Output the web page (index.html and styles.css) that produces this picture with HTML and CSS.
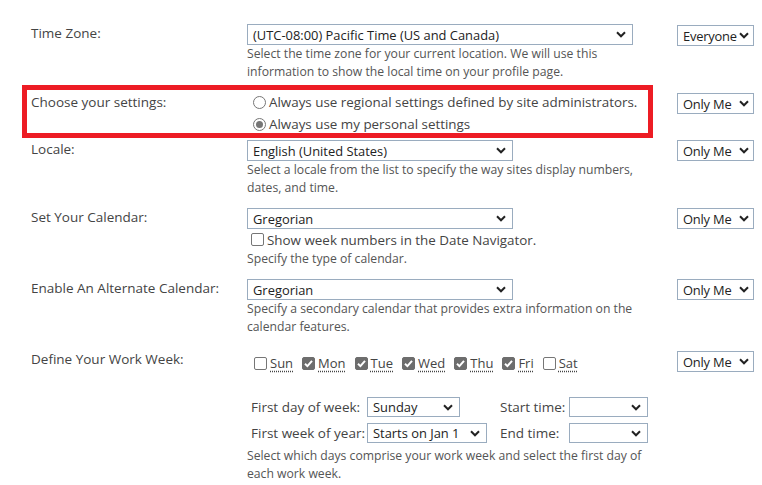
FILE: index.html
```html
<!DOCTYPE html>
<html lang="en">

<head>
    <meta charset="UTF-8">
    <title>Regional Settings</title>
    <link rel="stylesheet" href="styles.css">
</head>

<body>
    <div class="settings">
        <!-- Time zone -->
        <div class="row row-tz">
            <div class="label">Time Zone:</div>
            <div class="field">
                <div class="select w-tz"><span>(UTC-08:00) Pacific Time (US and Canada)</span><svg class="chev" width="10" height="7" viewBox="0 0 10 7"><path d="M1 1.3 L5 5.3 L9 1.3"/></svg></div>
                <div class="desc">Select the time zone for your current location. We will use this<br>information to show the local time on your profile page.</div>
            </div>
            <div class="privacy priv-top"><div class="select priv"><span>Everyone</span><svg class="chev" width="10" height="7" viewBox="0 0 10 7"><path d="M1 1.3 L5 5.3 L9 1.3"/></svg></div></div>
        </div>

        <!-- Choose settings (highlighted) -->
        <div class="row row-choose">
            <div class="label label-choose">Choose your settings:</div>
            <div class="field">
                <div class="option"><span class="radio"></span>Always use regional settings defined by site administrators.</div>
                <div class="option"><span class="radio checked"></span>Always use my personal settings</div>
            </div>
            <div class="privacy priv-choose"><div class="select priv"><span>Only Me</span><svg class="chev" width="10" height="7" viewBox="0 0 10 7"><path d="M1 1.3 L5 5.3 L9 1.3"/></svg></div></div>
        </div>

        <!-- Locale -->
        <div class="row row-locale">
            <div class="label">Locale:</div>
            <div class="field">
                <div class="select w-mid"><span>English (United States)</span><svg class="chev" width="10" height="7" viewBox="0 0 10 7"><path d="M1 1.3 L5 5.3 L9 1.3"/></svg></div>
                <div class="desc">Select a locale from the list to specify the way sites display numbers,<br>dates, and time.</div>
            </div>
            <div class="privacy"><div class="select priv"><span>Only Me</span><svg class="chev" width="10" height="7" viewBox="0 0 10 7"><path d="M1 1.3 L5 5.3 L9 1.3"/></svg></div></div>
        </div>

        <!-- Calendar -->
        <div class="row row-cal">
            <div class="label">Set Your Calendar:</div>
            <div class="field">
                <div class="select w-mid"><span>Gregorian</span><svg class="chev" width="10" height="7" viewBox="0 0 10 7"><path d="M1 1.3 L5 5.3 L9 1.3"/></svg></div>
                <div class="check-line"><span class="box"></span>Show week numbers in the Date Navigator.</div>
                <div class="desc">Specify the type of calendar.</div>
            </div>
            <div class="privacy"><div class="select priv"><span>Only Me</span><svg class="chev" width="10" height="7" viewBox="0 0 10 7"><path d="M1 1.3 L5 5.3 L9 1.3"/></svg></div></div>
        </div>

        <!-- Alternate calendar -->
        <div class="row row-alt">
            <div class="label">Enable An Alternate Calendar:</div>
            <div class="field">
                <div class="select w-mid"><span>Gregorian</span><svg class="chev" width="10" height="7" viewBox="0 0 10 7"><path d="M1 1.3 L5 5.3 L9 1.3"/></svg></div>
                <div class="desc">Specify a secondary calendar that provides extra information on the<br>calendar features.</div>
            </div>
            <div class="privacy"><div class="select priv"><span>Only Me</span><svg class="chev" width="10" height="7" viewBox="0 0 10 7"><path d="M1 1.3 L5 5.3 L9 1.3"/></svg></div></div>
        </div>

        <!-- Work week -->
        <div class="row row-week">
            <div class="label label-week">Define Your Work Week:</div>
            <div class="field">
                <div class="days">
                    <span class="day"><span class="box"></span><abbr>Sun</abbr></span>
                    <span class="day"><span class="box on"><svg width="13" height="13" viewBox="0 0 13 13"><path d="M3 6.8 L5.4 9.1 L10 3.8"/></svg></span><abbr>Mon</abbr></span>
                    <span class="day"><span class="box on"><svg width="13" height="13" viewBox="0 0 13 13"><path d="M3 6.8 L5.4 9.1 L10 3.8"/></svg></span><abbr>Tue</abbr></span>
                    <span class="day"><span class="box on"><svg width="13" height="13" viewBox="0 0 13 13"><path d="M3 6.8 L5.4 9.1 L10 3.8"/></svg></span><abbr>Wed</abbr></span>
                    <span class="day"><span class="box on"><svg width="13" height="13" viewBox="0 0 13 13"><path d="M3 6.8 L5.4 9.1 L10 3.8"/></svg></span><abbr>Thu</abbr></span>
                    <span class="day"><span class="box on"><svg width="13" height="13" viewBox="0 0 13 13"><path d="M3 6.8 L5.4 9.1 L10 3.8"/></svg></span><abbr>Fri</abbr></span>
                    <span class="day"><span class="box"></span><abbr>Sat</abbr></span>
                </div>

                <div class="week-grid">
                    <span class="sub-label">First day of week:</span>
                    <div class="select w-day"><span>Sunday</span><svg class="chev" width="10" height="7" viewBox="0 0 10 7"><path d="M1 1.3 L5 5.3 L9 1.3"/></svg></div>
                    <span class="sub-label">Start time:</span>
                    <div class="select w-time"><span></span><svg class="chev" width="10" height="7" viewBox="0 0 10 7"><path d="M1 1.3 L5 5.3 L9 1.3"/></svg></div>

                    <span class="sub-label">First week of year:</span>
                    <div class="select w-year"><span>Starts on Jan 1</span><svg class="chev" width="10" height="7" viewBox="0 0 10 7"><path d="M1 1.3 L5 5.3 L9 1.3"/></svg></div>
                    <span class="sub-label">End time:</span>
                    <div class="select w-time"><span></span><svg class="chev" width="10" height="7" viewBox="0 0 10 7"><path d="M1 1.3 L5 5.3 L9 1.3"/></svg></div>
                </div>

                <div class="desc desc-week">Select which days comprise your work week and select the first day of<br>each work week.</div>
            </div>
            <div class="privacy priv-week"><div class="select priv"><span>Only Me</span><svg class="chev" width="10" height="7" viewBox="0 0 10 7"><path d="M1 1.3 L5 5.3 L9 1.3"/></svg></div></div>
        </div>
    </div>
</body>

</html>
```

FILE: styles.css
```css
/* Page */
body {
    margin: 0;
    font-family: "Open Sans", "Liberation Sans", sans-serif;
    color: #444;
    background-color: #fff;
}

.settings {
    padding: 24px 8px 0 31px;
}

/* Rows: label | field | privacy */
.row {
    display: flex;
}

.label {
    width: 216px;
    flex-shrink: 0;
    font-size: 13.5px;
    line-height: 20px;
    margin-top: -1px;
}

.field {
    width: 430px;
    flex-shrink: 0;
}

.privacy {
    width: 77px;
}

/* Fake dropdowns */
.select {
    display: flex;
    align-items: center;
    justify-content: space-between;
    height: 21px;
    box-sizing: border-box;
    border: 1px solid #9aacbf;
    padding: 0 6px 0 5px;
    font-size: 12.9px;
    color: #222;
    background-color: #fff;
    white-space: nowrap;
}

.chev {
    flex-shrink: 0;
}

.chev path {
    fill: none;
    stroke: #222;
    stroke-width: 2;
}

.w-tz { width: 386px; }
.w-mid { width: 266px; }
.w-day { width: 93px; }
.w-year { width: 120px; }
.w-time { width: 79px; }

.priv {
    width: 77px;
    padding: 0 4px 0 5px;
    letter-spacing: -0.2px;
}

.priv-top {
    margin-top: 1px;
}

/* Help text */
.desc {
    font-size: 12.2px;
    line-height: 18px;
    color: #555;
}

/* Spacing between rows */
.row-choose {
    position: relative;
    margin-top: 10px;
}

/* red highlight drawn over the row */
.row-choose::before {
    content: "";
    position: absolute;
    left: -9px;
    top: -6px;
    width: 631px;
    height: 53px;
    border: 5px solid #ed1c24;
    box-sizing: border-box;
}

.label-choose {
    margin-top: 1px;
}

.priv-choose {
    margin-top: 2px;
}

.row-locale {
    margin-top: 5px;
}

.row-cal,
.row-alt {
    margin-top: 11px;
}

.row-week {
    margin-top: 12px;
}

.label-week {
    margin-top: 1px;
}

.priv-week {
    margin-top: 3px;
}

/* Radios */
.option {
    display: flex;
    align-items: center;
    height: 22px;
    font-size: 13.4px;
    color: #444;
}

.radio {
    width: 13px;
    height: 13px;
    box-sizing: border-box;
    border: 1px solid #767676;
    border-radius: 50%;
    margin: 0 3px 0 6px;
    position: relative;
}

.radio.checked::after {
    content: "";
    position: absolute;
    left: 2px;
    top: 2px;
    width: 7px;
    height: 7px;
    border-radius: 50%;
    background-color: #767676;
}

/* Checkboxes */
.box {
    display: inline-flex;
    width: 13px;
    height: 13px;
    box-sizing: border-box;
    border: 1px solid #767676;
    border-radius: 2px;
    background-color: #fff;
    flex-shrink: 0;
}

.box.on {
    background-color: #6d6d6d;
    border-color: #6d6d6d;
}

.box.on svg {
    margin: -1px;
}

.box.on path {
    fill: none;
    stroke: #fff;
    stroke-width: 2;
}

.check-line {
    display: flex;
    align-items: center;
    gap: 3px;
    height: 21px;
    padding-left: 4px;
    font-size: 13.4px;
}

/* Work week */
.days {
    display: flex;
    align-items: center;
    gap: 9px;
    height: 20px;
    margin-top: 5px;
    padding-left: 7px;
    font-size: 13px;
}

.day {
    display: flex;
    align-items: center;
    gap: 3px;
}

.day abbr {
    text-decoration: underline dotted;
    text-underline-offset: 3px;
}

.week-grid {
    display: grid;
    grid-template-columns: 116px 133px 69px 79px;
    grid-auto-rows: 20px;
    row-gap: 6px;
    align-items: center;
    margin-top: 24px;
    padding-left: 4px;
    font-size: 13.5px;
}

.week-grid .select {
    height: 20px;
}

.desc-week {
    margin-top: 4px;
}
```
